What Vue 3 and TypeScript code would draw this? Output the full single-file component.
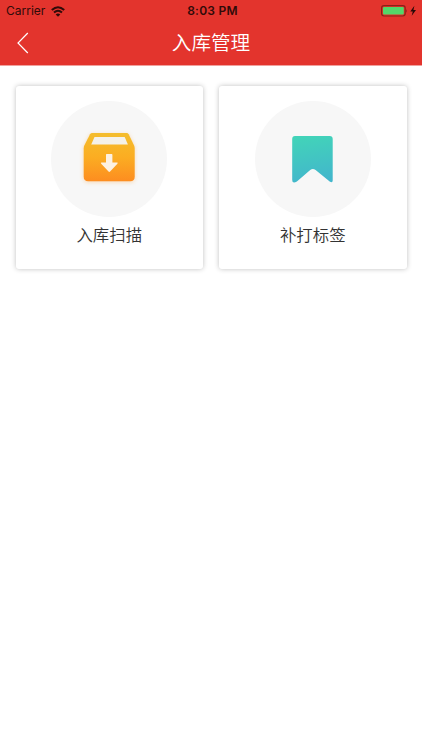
<script setup lang="ts">
interface MenuItem {
  icon: 'box' | 'bookmark'
  label: string
}

const title = '入库管理'
const items: MenuItem[] = [
  { icon: 'box', label: '入库扫描' },
  { icon: 'bookmark', label: '补打标签' },
]
</script>

<template>
  <div class="screen">
    <header class="header">
      <div class="status">
        <div class="carrier">
          <span>Carrier</span>
          <svg class="wifi" width="14" height="11" viewBox="0 0 14 11">
            <g fill="none" stroke="#300b09" stroke-width="2">
              <path d="M0.8 4.1 Q7 -1.7 13.2 4.1" />
              <path d="M3 6.6 Q7 2.9 11 6.6" />
            </g>
            <path d="M4.7 8.4 Q7 6.4 9.3 8.4 L7 10.7 Z" fill="#300b09" />
          </svg>
        </div>
        <div class="time">8:03 PM</div>
        <div class="power">
          <svg width="36" height="12" viewBox="0 0 36 12">
            <rect x="0.6" y="0.6" width="23.6" height="10.4" rx="2.4" fill="none" stroke="#8b2019" stroke-width="1.2" />
            <rect x="2" y="2" width="20.8" height="7.6" rx="1" fill="#53d769" />
            <path d="M25.2 3.9 Q26.8 5.8 25.2 7.7 Z" fill="#8b2019" />
            <path d="M33.4 0.8 L29.3 6.5 H31.8 L30.7 10.8 L35 5 H32.4 Z" fill="#250807" />
          </svg>
        </div>
      </div>
      <nav class="nav">
        <button class="back" aria-label="返回">
          <svg width="12" height="22" viewBox="0 0 12 22">
            <path d="M10.8 1 L1 11 L10.8 21" fill="none" stroke="#fff" stroke-width="1.2" />
          </svg>
        </button>
        <h1 class="title">{{ title }}</h1>
        <span />
      </nav>
    </header>

    <main class="grid">
      <section v-for="item in items" :key="item.icon" class="card">
        <div class="circle">
          <svg v-if="item.icon === 'box'" class="box" width="52" height="49" viewBox="-0.5 0 52 49">
            <defs>
              <linearGradient id="boxFill" x1="0" y1="0" x2="0" y2="1">
                <stop offset="0" stop-color="#f4bd2c" />
                <stop offset="0.5" stop-color="#fbad22" />
                <stop offset="1" stop-color="#fd8d20" />
              </linearGradient>
            </defs>
            <path
              fill="url(#boxFill)"
              d="M8.8 0 H43 Q44.5 0 45.2 1.3 L50.6 12.4 Q51.2 13.8 51.2 15.5 V43.8 Q51.2 48.2 46.8 48.2 H4.6 Q0.2 48.2 0.2 43.8 V15.5 Q0.2 13.8 0.8 12.4 L6.5 1.3 Q7.2 0 8.8 0 Z"
            />
            <path d="M11 3.9 H41.2 L44.4 11.5 H7.7 Z" fill="#f4f1e9" />
            <path
              d="M23.2 21 H28.2 Q28.9 21 28.9 21.7 V29.6 H33.5 Q34.8 29.6 33.9 30.8 L26.6 38.5 Q25.8 39.3 25 38.5 L17.7 30.8 Q16.8 29.6 18.1 29.6 H22.5 V21.7 Q22.5 21 23.2 21 Z"
              fill="#fdf1e2"
            />
          </svg>
          <svg v-else class="bookmark" width="41" height="47" viewBox="0 0 41 47">
            <defs>
              <linearGradient id="markFill" x1="0.4" y1="0" x2="0.55" y2="1">
                <stop offset="0" stop-color="#42d3b9" />
                <stop offset="1" stop-color="#42b6cc" />
              </linearGradient>
            </defs>
            <path
              fill="url(#markFill)"
              d="M3 0 H37.7 Q40.7 0 40.7 3 V44.5 Q40.7 47.2 38 45.8 L23.6 34 Q20.8 31.9 18.2 34 L4.9 45.6 Q0.2 48 0.2 44 V3 Q0.2 0 3 0 Z"
            />
          </svg>
        </div>
        <div class="label">{{ item.label }}</div>
      </section>
    </main>
  </div>
</template>

<style>
body {
  background: #fff;
}
</style>

<style scoped>
.screen {
  min-height: 750px;
  background: #fff;
  font-family: Inter, 'Noto Sans CJK SC', sans-serif;
}

.header {
  height: 65px;
  background: #e3342d;
  border-bottom: 1px solid #f0a19d;
}

.status {
  display: grid;
  grid-template-columns: 1fr auto 1fr;
  align-items: center;
  height: 22px;
  padding: 0 5px 0 6px;
  color: #300b09;
  font-size: 12px;
  line-height: 22px;
}

.carrier {
  display: flex;
  align-items: center;
  gap: 6px;
}

.time {
  padding-left: 2px;
  font-weight: 600;
  letter-spacing: 0.25px;
}

.power {
  display: flex;
  justify-content: flex-end;
}

.nav {
  display: grid;
  grid-template-columns: 1fr auto 1fr;
  align-items: center;
  height: 42px;
}

.back {
  display: flex;
  width: 29px;
  padding: 0 0 0 17px;
  border: 0;
  background: none;
}

.title {
  margin: 0 0 2px;
  color: #fff;
  font-size: 19.6px;
  font-weight: 350;
  line-height: 28px;
  font-family: 'Noto Sans CJK SC', sans-serif;
}

.grid {
  display: grid;
  grid-template-columns: 1fr 1fr;
  gap: 16px;
  padding: 20px 15.5px;
}

.card {
  display: flex;
  flex-direction: column;
  align-items: center;
  box-sizing: border-box;
  height: 183px;
  padding-top: 15px;
  border-radius: 3px;
  background: #fff;
  box-shadow: 0 0 5px rgba(0, 0, 0, 0.25);
}

.circle {
  display: flex;
  align-items: center;
  justify-content: center;
  width: 116px;
  height: 116px;
  border-radius: 50%;
  background: #f7f7f7;
}

.box {
  margin-top: -3px;
  overflow: visible;
  filter: drop-shadow(0 1px 2px rgba(253, 160, 50, 0.35));
}

.label {
  margin-top: 5px;
  color: #333;
  font-size: 16.4px;
  font-weight: 350;
  line-height: 24px;
  font-family: 'Noto Sans CJK SC', sans-serif;
}
</style>
